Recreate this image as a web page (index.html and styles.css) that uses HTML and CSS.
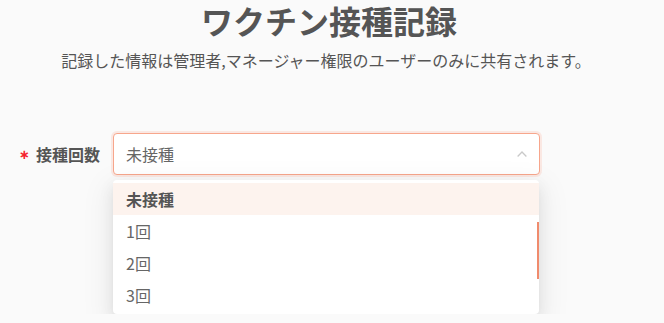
FILE: index.html
```html
<!DOCTYPE html>
<html lang="ja">
<head>
<meta charset="utf-8">
<title>ワクチン接種記録</title>
<link rel="stylesheet" href="styles.css">
</head>
<body>
<main class="page">
  <header class="head">
    <h1 class="title">ワクチン接種記録</h1>
    <p class="lead">記録した情報は管理者,マネージャー権限のユーザーのみに共有されます。</p>
  </header>
  <div class="form">
    <div class="row">
      <div class="label"><span class="req">∗</span>接種回数</div>
      <div class="select-wrap">
        <div class="select">
          <span class="select-value">未接種</span>
          <svg class="chev" width="10" height="6" viewBox="0 0 10 6"><polyline points="0.6,5.5 5,1 9.4,5.5" fill="none" stroke="#c9c9c9" stroke-width="1.3"/></svg>
        </div>
        <div class="menu">
          <div class="opt active">未接種</div>
          <div class="opt">1回</div>
          <div class="opt">2回</div>
          <div class="opt">3回</div>
          <div class="thumb"></div>
        </div>
      </div>
    </div>
  </div>
</main>
</body>
</html>
```
FILE: styles.css
```css
html, body {
  margin: 0;
  padding: 0;
}
body {
  background: #fafafa;
  font-family: "Noto Sans CJK JP", "Noto Sans", sans-serif;
  color: #555;
}
.page {
  width: 664px;
}
.head {
  text-align: center;
}
.title {
  margin: 0;
  padding-right: 6px;
  font-size: 32px;
  line-height: 40px;
  font-weight: 700;
  color: #555;
}
.lead {
  margin: 9px 0 0;
  padding-right: 12px;
  font-size: 16px;
  line-height: 22px;
  color: #555;
}
.form {
  margin-top: 62px;
}
.row {
  display: flex;
  align-items: flex-start;
  gap: 13px;
}
.label {
  width: 100px;
  height: 42px;
  display: flex;
  justify-content: flex-end;
  align-items: center;
  font-size: 16px;
  font-weight: 700;
  color: #555;
}
.req {
  font-family: "DejaVu Sans", sans-serif;
  font-size: 13px;
  font-weight: 700;
  color: #f5222d;
  margin-right: 6px;
  line-height: 1;
}
.select-wrap {
  width: 427px;
  display: flex;
  flex-direction: column;
  gap: 5px;
}
.select {
  box-sizing: border-box;
  height: 42px;
  display: flex;
  align-items: center;
  justify-content: space-between;
  padding: 0 12px 0 12px;
  background: #fff;
  border: 1px solid #f7a68c;
  border-radius: 4px;
  box-shadow: 0 0 0 2px rgba(250, 170, 145, 0.22);
}
.select-value {
  font-size: 16px;
  color: #666;
}
.chev {
  display: block;
}
.menu {
  position: relative;
  width: 426px;
  padding: 3px 0;
  background: #fff;
  border-radius: 4px;
  box-shadow: 0 3px 6px -4px rgba(0,0,0,.12), 0 6px 16px 0 rgba(0,0,0,.08), 0 9px 28px 8px rgba(0,0,0,.05);
}
.opt {
  height: 32px;
  line-height: 32px;
  padding: 0 13px;
  font-size: 16px;
  color: #666;
}
.opt.active {
  background: #fdf3ee;
  font-weight: 700;
  color: #555;
}
.thumb {
  position: absolute;
  right: 0;
  top: 42px;
  width: 2px;
  height: 57px;
  background: #f08b6d;
}
```
